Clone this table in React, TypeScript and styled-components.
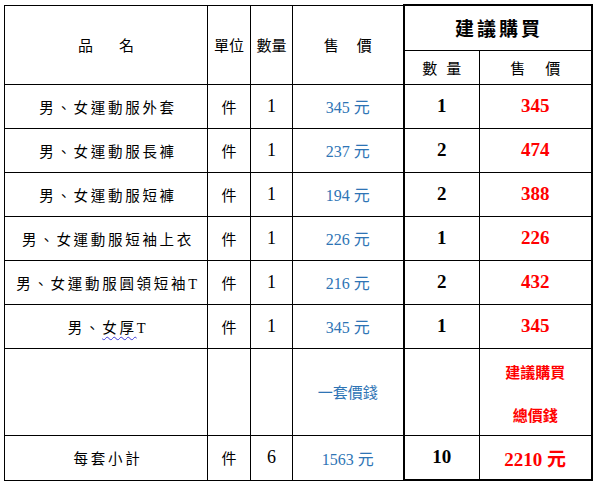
import React from "react";
import styled, { createGlobalStyle } from "styled-components";

const Global = createGlobalStyle`
  html, body { margin: 0; padding: 0; background: #fff; }
  body { font-family: "Liberation Serif", "Noto Sans CJK TC", serif; color: #000; }
`;

const Page = styled.div`
  padding: 4px 0 0 4px;
`;

const Table = styled.table`
  border-collapse: collapse;
  table-layout: fixed;
  width: 587px;
  font-family: "Liberation Serif", "Noto Sans CJK TC", serif;
`;

type Tone = "black" | "blue" | "red";
const toneColor: Record<Tone, string> = {
  black: "#000",
  blue: "#2E74B5",
  red: "#FF0000",
};

const Cell = styled.td<{
  $tone?: Tone;
  $bold?: boolean;
  $size?: number;
  $thickL?: boolean;
  $thickR?: boolean;
  $thickT?: boolean;
  $thickB?: boolean;
}>`
  border: 1px solid #000;
  ${(p) => (p.$thickL ? "border-left: 2px solid #000;" : "")}
  ${(p) => (p.$thickR ? "border-right: 2px solid #000;" : "")}
  ${(p) => (p.$thickT ? "border-top: 2px solid #000;" : "")}
  ${(p) => (p.$thickB ? "border-bottom: 2px solid #000;" : "")}
  padding: 0;
  text-align: center;
  vertical-align: middle;
  color: ${(p) => toneColor[p.$tone ?? "black"]};
  font-weight: ${(p) => (p.$bold ? 700 : 400)};
  font-size: ${(p) => p.$size ?? 15}px;
  white-space: nowrap;
`;

const Row = styled.tr<{ $h: number }>`
  height: ${(p) => p.$h}px;
`;

const Name = styled.span`
  font-size: 14.5px;
  letter-spacing: 2.7px;
  padding-left: 4px;
`;

const Wavy = styled.span`
  text-decoration: underline wavy #3b3bd6;
  text-decoration-thickness: 1px;
  text-underline-offset: 3px;
`;

const Spread = styled.span<{ $gap: number }>`
  display: inline-flex;
  gap: ${(p) => p.$gap}px;
  justify-content: center;
`;

const Stack = styled.div`
  display: flex;
  flex-direction: column;
  align-items: center;
  gap: 22px;
  padding-top: 2px;
`;

const items: { name: React.ReactNode; price: string; qty: number; sum: string }[] = [
  { name: "男、女運動服外套", price: "345 元", qty: 1, sum: "345" },
  { name: "男、女運動服長褲", price: "237 元", qty: 2, sum: "474" },
  { name: "男、女運動服短褲", price: "194 元", qty: 2, sum: "388" },
  { name: "男、女運動服短袖上衣", price: "226 元", qty: 1, sum: "226" },
  { name: "男、女運動服圓領短袖T", price: "216  元", qty: 2, sum: "432" },
  {
    name: (
      <>
        男、<Wavy>女厚</Wavy>T
      </>
    ),
    price: "345 元",
    qty: 1,
    sum: "345",
  },
];

export default function App() {
  return (
    <Page>
      <Global />
      <Table>
        <colgroup>
          <col style={{ width: 203 }} />
          <col style={{ width: 43 }} />
          <col style={{ width: 42 }} />
          <col style={{ width: 111 }} />
          <col style={{ width: 76 }} />
          <col style={{ width: 112 }} />
        </colgroup>
        <tbody>
          <Row $h={45}>
            <Cell rowSpan={2}>
              <Spread $gap={26}>
                <span>品</span>
                <span>名</span>
              </Spread>
            </Cell>
            <Cell rowSpan={2}>單位</Cell>
            <Cell rowSpan={2}>數量</Cell>
            <Cell rowSpan={2}>
              <Spread $gap={18}>
                <span>售</span>
                <span>價</span>
              </Spread>
            </Cell>
            <Cell colSpan={2} $thickL $thickR $thickT $bold $size={19}>
              <Spread $gap={3}>
                <span>建</span>
                <span>議</span>
                <span>購</span>
                <span>買</span>
              </Spread>
            </Cell>
          </Row>
          <Row $h={34}>
            <Cell $thickL>
              <Spread $gap={9}>
                <span>數</span>
                <span>量</span>
              </Spread>
            </Cell>
            <Cell $thickR>
              <Spread $gap={20}>
                <span>售</span>
                <span>價</span>
              </Spread>
            </Cell>
          </Row>
          {items.map((it, i) => (
            <Row $h={44} key={i}>
              <Cell>
                <Name>{it.name}</Name>
              </Cell>
              <Cell>件</Cell>
              <Cell $size={18}>1</Cell>
              <Cell $tone="blue" $size={16}>
                {it.price}
              </Cell>
              <Cell $thickL $bold $size={19}>
                {it.qty}
              </Cell>
              <Cell $thickR $tone="red" $bold $size={19}>
                {it.sum}
              </Cell>
            </Row>
          ))}
          <Row $h={87}>
            <Cell />
            <Cell />
            <Cell />
            <Cell $tone="blue">一套價錢</Cell>
            <Cell $thickL />
            <Cell $thickR $tone="red" $bold>
              <Stack>
                <span>建議購買</span>
                <span>總價錢</span>
              </Stack>
            </Cell>
          </Row>
          <Row $h={45}>
            <Cell>
              <Name>每套小計</Name>
            </Cell>
            <Cell>件</Cell>
            <Cell $size={18}>6</Cell>
            <Cell $tone="blue" $size={16}>
              1563 元
            </Cell>
            <Cell $thickL $thickB $bold $size={19}>
              10
            </Cell>
            <Cell $thickR $thickB $tone="red" $bold $size={19}>
              2210 元
            </Cell>
          </Row>
        </tbody>
      </Table>
    </Page>
  );
}
